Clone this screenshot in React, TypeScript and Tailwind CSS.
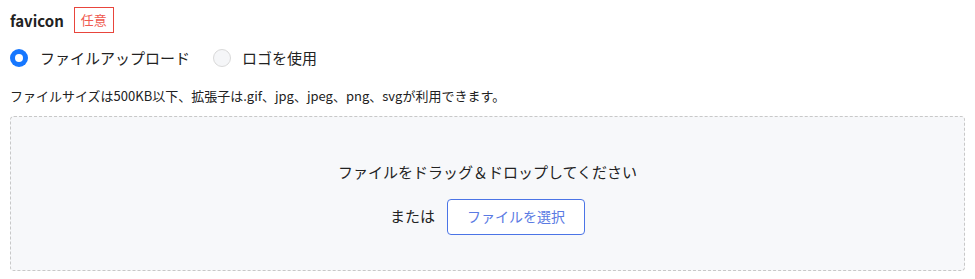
const font = { fontFamily: '"Noto Sans CJK JP", "Noto Sans", sans-serif' };

export default function App() {
  return (
    <div className="px-[10px] pt-[7px] text-[#222]" style={font}>
      {/* title */}
      <div className="flex items-center gap-[10px]">
        <span className="text-[15px] font-bold leading-none">favicon</span>
        <span className="flex h-[26px] items-center border border-[#e8453c] px-[6px] text-[13px] text-[#ef5a4f]">
          任意
        </span>
      </div>

      {/* radio */}
      <div className="mt-[14px] flex items-center text-[15px]">
        <label className="flex items-center gap-[12px]">
          <span className="flex h-[18px] w-[18px] items-center justify-center rounded-full bg-[#1677ff]">
            <span className="h-[8px] w-[8px] rounded-full bg-white" />
          </span>
          ファイルアップロード
        </label>
        <label className="ml-[23px] flex items-center gap-[11px]">
          <span className="h-[18px] w-[18px] rounded-full border border-[#d9d9d9] bg-[#f5f6f8]" />
          ロゴを使用
        </label>
      </div>

      <p className="mt-[17px] text-[13px] leading-[18px]">
        ファイルサイズは500KB以下、拡張子は.gif、jpg、jpeg、png、svgが利用できます。
      </p>

      {/* dropzone */}
      <div className="mt-[11px] flex h-[155px] flex-col items-center justify-center rounded-[4px] border border-dashed border-[#c8c8c8] bg-[#f7f8fa] pt-[10px]">
        <p className="text-[15px] leading-[20px]">ファイルをドラッグ＆ドロップしてください</p>
        <div className="mt-[17px] flex items-center gap-[12px] text-[15px]">
          <span>または</span>
          <button className="flex h-[36px] w-[138px] items-center justify-center rounded-[4px] border border-[#4b74e6] bg-white text-[14px] text-[#5a7ae3]">
            ファイルを選択
          </button>
        </div>
      </div>
    </div>
  );
}
